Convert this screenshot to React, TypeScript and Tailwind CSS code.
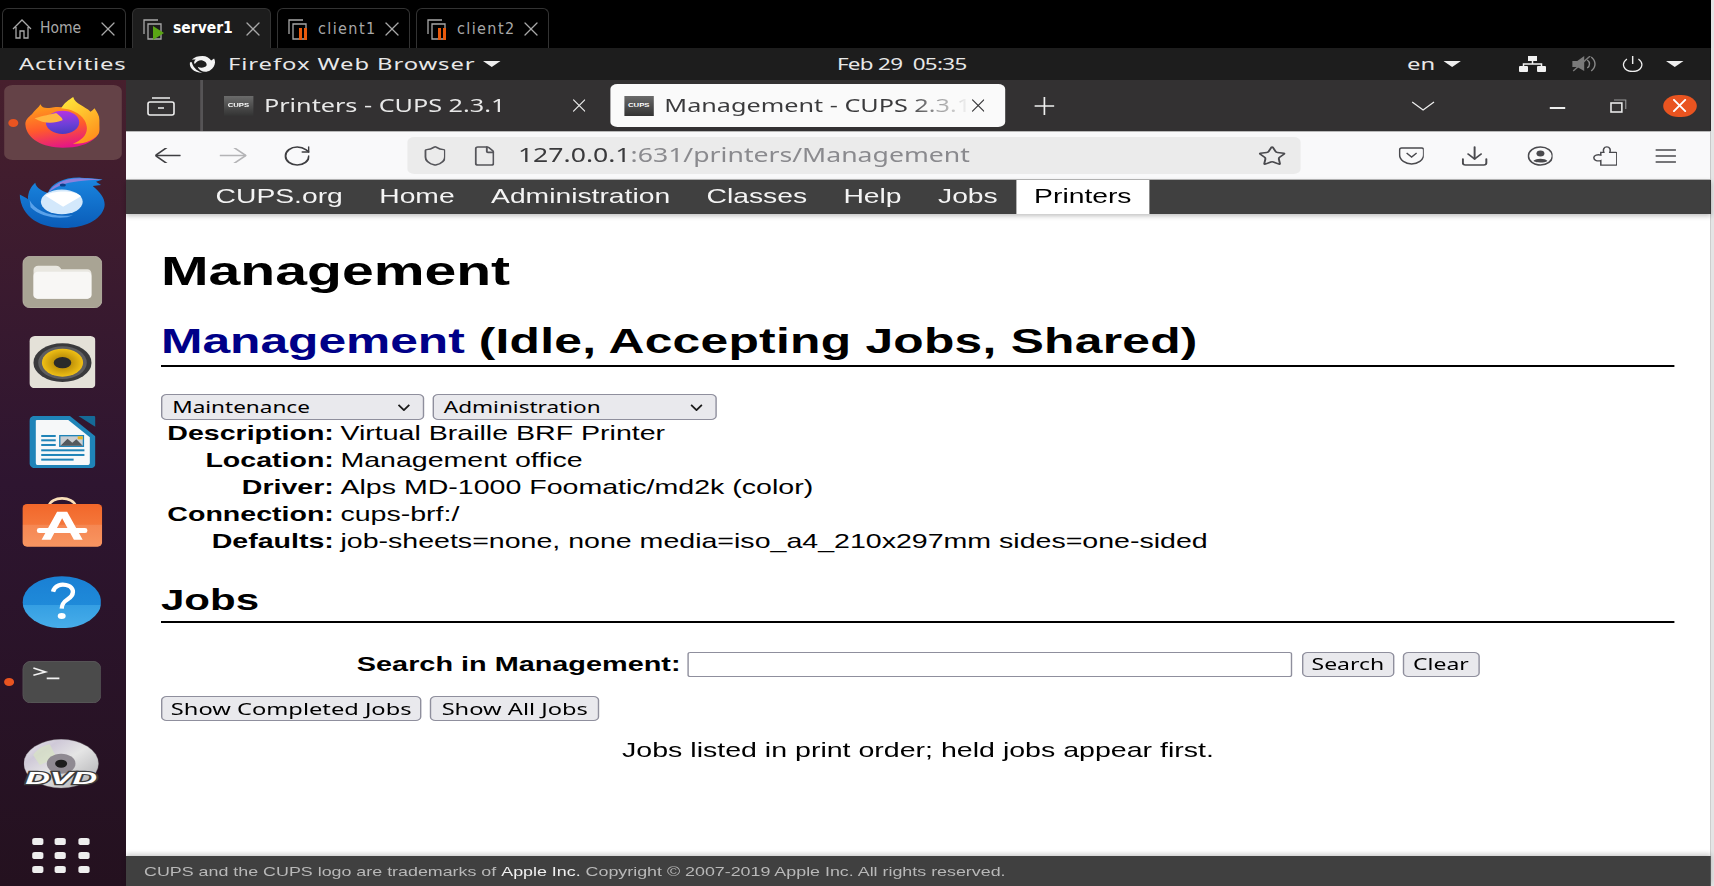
import { ArrowLeft, ArrowRight, Download, File, Plus, RotateCw, Shield, Star, X } from "lucide-react";

const ui = { fontFamily: '"Noto Sans", sans-serif' };
const arial = { fontFamily: '"Liberation Sans", Arial, sans-serif' };

const FirefoxLogo = () => (
  <svg viewBox="72 48 226 152" preserveAspectRatio="none" className="h-[50.7px] w-[53.8px]">
    <defs>
      <linearGradient id="ffBase" x1="0.2" y1="0" x2="0.5" y2="1">
        <stop offset="0" stopColor="#ffa21a" />
        <stop offset="0.55" stopColor="#ff5a2c" />
        <stop offset="1" stopColor="#e31587" />
      </linearGradient>
      <linearGradient id="ffTop" x1="0.2" y1="0" x2="0.8" y2="1">
        <stop offset="0" stopColor="#ffe63a" />
        <stop offset="1" stopColor="#ff8a1a" />
      </linearGradient>
      <linearGradient id="ffMid" x1="0.4" y1="0" x2="0.5" y2="1">
        <stop offset="0" stopColor="#b833e1" />
        <stop offset="0.6" stopColor="#6d3fd8" />
        <stop offset="1" stopColor="#4a3bc0" />
      </linearGradient>
    </defs>
    <path d="M92 100C100 88 112 80 118 70C122 82 135 82 150 80C170 74 240 80 280 110C298 130 300 150 285 168C262 192 225 200 185 200C125 200 76 175 72 130C72 118 82 108 92 100Z" fill="url(#ffBase)" />
    <path d="M180 82C188 66 204 56 216 48C222 70 250 74 268 92C272 90 276 86 280 82C296 104 302 128 295 152C286 176 250 190 215 188C250 175 268 150 250 118C236 95 208 84 180 82Z" fill="url(#ffTop)" />
    <ellipse cx="184" cy="124" rx="50" ry="35" fill="url(#ffMid)" />
    <path d="M100 112C125 104 150 100 165 96C175 104 186 112 184 118C160 128 128 130 100 112Z" fill="#ffb640" />
  </svg>
);

const ThunderbirdLogo = () => (
  <svg viewBox="55 290 257 160" preserveAspectRatio="none" className="h-[51px] w-[61px]">
    <defs>
      <linearGradient id="tbBody" x1="0.5" y1="0" x2="0.5" y2="1">
        <stop offset="0" stopColor="#1a86e0" />
        <stop offset="1" stopColor="#0a5cb8" />
      </linearGradient>
    </defs>
    <path d="M140 340C150 310 190 290 240 292C270 293 290 295 305 298L285 305L300 315L275 318C300 340 315 360 310 385C300 425 250 450 190 450C120 450 60 420 55 345C65 350 75 355 80 360C80 335 90 320 102 308C105 325 125 335 140 340Z" fill="url(#tbBody)" />
    <path d="M142 338C155 312 195 292 240 294C262 295 285 296 303 299C270 300 225 302 190 312C170 318 155 328 142 338Z" fill="#8a80dc" />
    <ellipse cx="182" cy="368" rx="63" ry="39" fill="#d3e8fb" />
    <path d="M132 348C150 334 215 328 240 350L186 383Z" fill="#ffffff" />
    <ellipse cx="185" cy="315" rx="9" ry="5" fill="#0c3f8a" />
    <path d="M85 362C100 395 150 418 215 410C190 425 120 420 88 385Z" fill="#5aa2ea" />
  </svg>
);

const FilesIcon = () => (
  <svg viewBox="65 108 237 157" preserveAspectRatio="none" className="h-[52.3px] w-[57px]">
    <rect x="66" y="109" width="235" height="155" rx="22" fill="#a9a494" stroke="#c4c0b2" strokeWidth="2" />
    <path d="M98 150C98 142 104 137 112 137H165C172 137 176 140 181 148H258C265 148 270 153 270 160V225C270 231 265 236 258 236H110C103 236 98 231 98 225Z" fill="#e9e7e0" />
    <path d="M98 168C98 160 103 155 111 155H258C265 155 270 160 270 167V225C270 231 265 236 258 236H110C103 236 98 231 98 225Z" fill="#f8f7f5" />
  </svg>
);

const RhythmboxIcon = () => (
  <svg viewBox="85 348 197 157" preserveAspectRatio="none" className="h-[52.3px] w-[47.5px]">
    <defs>
      <radialGradient id="rbCone">
        <stop offset="0.3" stopColor="#b78a07" />
        <stop offset="1" stopColor="#f0c015" />
      </radialGradient>
    </defs>
    <rect x="85" y="348" width="197" height="157" rx="16" fill="#e4e1d8" />
    <ellipse cx="183" cy="428" rx="86" ry="58" fill="#3a3a3c" />
    <ellipse cx="183" cy="428" rx="72" ry="49" fill="#5e5e60" />
    <ellipse cx="183" cy="428" rx="61" ry="42" fill="url(#rbCone)" />
    <ellipse cx="183" cy="428" rx="26" ry="17" fill="#2a2a2a" />
  </svg>
);

const WriterIcon = () => (
  <svg viewBox="85 588 197 157" preserveAspectRatio="none" className="h-[52.3px] w-[47.5px]">
    <path d="M100 588H205L282 650V730C282 738 275 745 265 745H102C93 745 85 738 85 730V602C85 594 92 588 100 588Z" fill="#1f84b8" />
    <path d="M230 588H275C280 588 283 592 283 597V622Z" fill="#156a97" />
    <path d="M106 600H200L264 652V728C264 732 261 735 257 735H110C106 735 104 732 104 728V602Z" fill="#f6f8f9" />
    <rect x="120" y="645" width="43" height="6" fill="#1f84b8" />
    <rect x="120" y="658" width="43" height="6" fill="#1f84b8" />
    <rect x="120" y="672" width="43" height="6" fill="#1f84b8" />
    <rect x="173" y="645" width="74" height="36" fill="#1f84b8" />
    <rect x="177" y="649" width="66" height="28" fill="#c9ced2" />
    <path d="M177 677L198 656L212 668L224 658L243 677Z" fill="#55595d" />
    <rect x="228" y="649" width="15" height="9" fill="#e6b422" />
    <rect x="120" y="688" width="128" height="6" fill="#1f84b8" />
    <rect x="120" y="702" width="128" height="6" fill="#1f84b8" />
    <rect x="120" y="716" width="96" height="6" fill="#1f84b8" />
  </svg>
);

const SoftwareIcon = () => (
  <svg viewBox="65 822 237 150" preserveAspectRatio="none" className="h-[50px] w-[57px]">
    <defs>
      <linearGradient id="swBag" x1="0" y1="0" x2="0" y2="1">
        <stop offset="0" stopColor="#f2672a" />
        <stop offset="1" stopColor="#f7874c" />
      </linearGradient>
    </defs>
    <path d="M143 850C150 818 215 818 224 850" fill="none" stroke="#f9dfb8" strokeWidth="8" />
    <rect x="65" y="843" width="237" height="128" rx="14" fill="url(#swBag)" />
    <path d="M65 905H302V957C302 965 295 971 288 971H79C72 971 65 965 65 957Z" fill="#ffffff" opacity="0.12" />
    <path d="M168 866H198L244 950H218L183 886L149 950H122Z" fill="#ffffff" />
    <rect x="108" y="915" width="150" height="15" rx="7" fill="#ffffff" />
  </svg>
);

const HelpIcon = () => (
  <svg viewBox="65 78 237 157" preserveAspectRatio="none" className="h-[52.3px] w-[56.4px]">
    <defs>
      <linearGradient id="hpBody" x1="0" y1="0" x2="0" y2="1">
        <stop offset="0" stopColor="#1a80d4" />
        <stop offset="0.55" stopColor="#1f8ad9" />
        <stop offset="0.56" stopColor="#359fe3" />
        <stop offset="1" stopColor="#47ade9" />
      </linearGradient>
    </defs>
    <ellipse cx="183.5" cy="156.5" rx="118" ry="78" fill="url(#hpBody)" />
    <path d="M157 125C162 105 182 102 196 105C214 109 222 122 213 137C205 150 184 150 183 176" fill="none" stroke="#ffffff" strokeWidth="13" />
    <ellipse cx="183" cy="198" rx="12" ry="9" fill="#ffffff" />
  </svg>
);

const TerminalIcon = () => (
  <svg viewBox="65 333 237 127" preserveAspectRatio="none" className="h-[42.3px] w-[56.4px]">
    <rect x="66" y="334" width="235" height="125" rx="24" fill="#4b4b4b" stroke="#666666" strokeWidth="2" />
    <path d="M98 354L134 366L98 376" fill="none" stroke="#f2f2f2" strokeWidth="5" />
    <path d="M138 385H176" stroke="#f2f2f2" strokeWidth="5" />
  </svg>
);

const DvdIcon = () => (
  <svg viewBox="72 562 225 148" preserveAspectRatio="none" className="h-[49.3px] w-[53.6px]">
    <defs>
      <linearGradient id="dvdDisc" x1="0" y1="0" x2="1" y2="1">
        <stop offset="0" stopColor="#efeff0" />
        <stop offset="0.25" stopColor="#cfc9d8" />
        <stop offset="0.5" stopColor="#e5e5e5" />
        <stop offset="1" stopColor="#a9a9ad" />
      </linearGradient>
    </defs>
    <ellipse cx="184" cy="636" rx="112" ry="73" fill="url(#dvdDisc)" stroke="#8f8f8f" strokeWidth="1" />
    <path d="M100 610C115 590 135 580 150 578L170 618L120 640Z" fill="#d8e8c0" opacity="0.6" />
    <ellipse cx="184" cy="636" rx="43" ry="30" fill="#8f8a92" />
    <ellipse cx="184" cy="636" rx="18" ry="12" fill="#1c1c1c" />
    <text x="76" y="697" textLength="216" lengthAdjust="spacingAndGlyphs" fontFamily="Liberation Sans" fontStyle="italic" fontWeight="700" fontSize="52" fill="#ffffff" stroke="#3c3c3c" strokeWidth="7" paintOrder="stroke">
      DVD
    </text>
  </svg>
);

const AppGrid = () => (
  <div className="grid w-[45px] grid-cols-3 gap-x-[4.5px] gap-y-[7px]">
    {Array.from({ length: 9 }).map((_, i) => (
      <span key={i} className="h-[7px] w-[8.2px] rounded-[2px] bg-[#eeeeee]" />
    ))}
  </div>
);

const RunningDot = () => (
  <span className="absolute left-[3px] top-1/2 h-[8px] w-[7px] -translate-y-1/2 rounded-full bg-[#e95420]" />
);

const Dock = () => (
  <div className="flex h-[806px] w-[90px] shrink-0 flex-col bg-gradient-to-b from-[#471f2d] via-[#2e1530] to-[#24111f] pt-[5px]">
    <div className="relative mx-[3px] flex h-[75px] shrink-0 items-center justify-center rounded-[6px] bg-[#644247] pr-[1px]">
      <FirefoxLogo />
      <RunningDot />
    </div>
    <div className="flex h-[82px] shrink-0 items-center justify-center pr-[2px] pt-[3px]"><ThunderbirdLogo /></div>
    <div className="flex h-[80px] shrink-0 items-center justify-center pr-[1.5px]"><FilesIcon /></div>
    <div className="flex h-[80px] shrink-0 items-center justify-center pr-[1.5px]"><RhythmboxIcon /></div>
    <div className="flex h-[80px] shrink-0 items-center justify-center pr-[1.5px]"><WriterIcon /></div>
    <div className="flex h-[80px] shrink-0 items-center justify-center pr-[1.5px]"><SoftwareIcon /></div>
    <div className="flex h-[80px] shrink-0 items-center justify-center pr-[1.5px]"><HelpIcon /></div>
    <div className="relative flex h-[80px] shrink-0 items-center justify-center pr-[1.5px]"><TerminalIcon /><RunningDot /></div>
    <div className="mt-[2px] flex h-[80px] shrink-0 items-center justify-center pr-[1.5px]"><DvdIcon /></div>
    <div className="mt-[34px] flex justify-center"><AppGrid /></div>
  </div>
);

const Caret = () => (
  <svg viewBox="0 0 18 6" preserveAspectRatio="none" className="h-[6px] w-[12.5px] shrink-0">
    <path d="M0 0H18L9 6Z" fill="#eeeeee" />
  </svg>
);

const TopPanel = () => (
  <div className="flex h-[32px] items-center bg-[#1d1d1d] pl-[13.6px] text-[17px] text-[#e8e8e8]" style={ui}>
    <span className="w-[77px] whitespace-nowrap tracking-[0.6px]">Activities</span>
    <svg viewBox="0 0 28 20" preserveAspectRatio="none" className="ml-[44px] h-[18px] w-[19.3px]">
      <path d="M14 1C9 1 6 2 3 5L7 5C5 7 5 9 6 10C8 7 11 5 14 6C17 7 19 9 18 12C17 14 12 15 9 13C11 19 18 20 22 17C27 13 28 8 26 4L23 6C21 3 18 1 14 1Z" fill="#f2f2f2" />
      <path d="M1 8C0 14 4 19 14 20C7 17 4 13 3 8Z" fill="#f2f2f2" />
    </svg>
    <span className="ml-[9px] w-[176px] whitespace-nowrap tracking-[0.65px]">Firefox Web Browser</span>
    <span className="ml-[6.4px]"><Caret /></span>
    <span className="ml-[240px] w-[112px] whitespace-nowrap text-[16px] tracking-[-0.48px]">Feb 29&nbsp; 05:35</span>
    <span className="ml-[295.2px] w-[20px] whitespace-nowrap">en</span>
    <span className="ml-[6.5px]"><Caret /></span>
    <svg viewBox="0 0 27 16" preserveAspectRatio="none" className="ml-[41.5px] h-[16px] w-[19.3px]">
      <rect x="9" y="0" width="9" height="5" fill="#f2f2f2" />
      <rect x="0" y="10" width="9" height="6" rx="1" fill="#f2f2f2" />
      <rect x="18" y="10" width="9" height="6" rx="1" fill="#f2f2f2" />
      <path d="M13.5 5V8M4.5 10V8H22.5V10" fill="none" stroke="#f2f2f2" strokeWidth="1.5" />
    </svg>
    <svg viewBox="0 0 25 16" preserveAspectRatio="none" className="ml-[17.8px] h-[16px] w-[17.9px]">
      <path d="M0 5H5L12 0V15L5 11H0Z" fill="#7a7a7a" />
      <path d="M15 4C18 6 18 10 15 12M19 1C24 5 24 11 19 15" fill="none" stroke="#8a8a8a" strokeWidth="1.4" />
      <path d="M1 15L18 0" stroke="#7a7a7a" strokeWidth="1.5" />
    </svg>
    <svg viewBox="0 0 24 16" preserveAspectRatio="none" className="ml-[17.8px] h-[16px] w-[16.4px]">
      <path d="M6 3C-1 8 3 15.5 12 15.5C21 15.5 25 8 18 3" fill="none" stroke="#eeeeee" strokeWidth="1.3" />
      <path d="M12 0V8" stroke="#eeeeee" strokeWidth="1.5" />
    </svg>
    <span className="ml-[15.7px]"><Caret /></span>
  </div>
);

const Favicon = () => (
  <span className="flex h-[20px] w-[20.5px] shrink-0 items-center justify-center bg-gradient-to-b from-[#6b6b6b] to-[#333333] text-[5.5px] font-bold text-white" style={arial}>
    CUPS
  </span>
);

const TitleBar = () => (
  <div className="flex h-[51px] shrink-0 items-center bg-[#333132] text-[18px]" style={ui}>
    <div className="flex h-full w-[54.5px] shrink-0 items-center border-r-2 border-[#565456] pl-[15px]">
      <svg viewBox="0 0 28 20" preserveAspectRatio="none" className="h-[20px] w-[20px]">
        <rect x="1" y="6" width="26" height="13" rx="2" fill="none" stroke="#eeeeee" strokeWidth="1.6" />
        <path d="M5 2H23M11 12H17" stroke="#eeeeee" strokeWidth="1.6" />
      </svg>
    </div>
    <div className="flex w-[288.5px] items-center pl-[15.5px] text-[#e8e8e8]">
      <Favicon />
      <span className="ml-[8px] w-[175px] whitespace-nowrap">Printers - CUPS 2.3.1</span>
      <X viewBox="5 5 14 14" className="ml-[45px] h-[13px] w-[9.4px] text-[#e8e8e8]" strokeWidth={1.3} preserveAspectRatio="none" />
    </div>
    <div className="ml-[3px] flex h-[43px] w-[282px] items-center rounded-[5px] bg-[#fafafa] pl-[10px] text-[#3a3a3c]">
      <Favicon />
      <span className="ml-[8px] w-[222px] whitespace-nowrap bg-gradient-to-r from-[#3a3a3c] from-78% to-transparent to-98% bg-clip-text text-transparent">
        Management - CUPS 2.3.1
      </span>
      <X viewBox="5 5 14 14" className="ml-[-3px] h-[13px] w-[9.4px] shrink-0 text-[#3a3a3c]" strokeWidth={1.3} preserveAspectRatio="none" />
    </div>
    <Plus viewBox="5 5 14 14" className="ml-[20.7px] h-[18px] w-[14px] text-[#f0f0f0]" strokeWidth={1.2} preserveAspectRatio="none" />
    <svg viewBox="0 0 24 10" preserveAspectRatio="none" className="ml-[255.7px] h-[10px] w-[17px]">
      <path d="M1 1L12 9L23 1" fill="none" stroke="#eeeeee" strokeWidth="1.3" />
    </svg>
    <span className="ml-[81.5px] mt-[5px] h-[1.5px] w-[11.4px] bg-[#eeeeee]" />
    <svg viewBox="0 0 17 16" preserveAspectRatio="none" className="ml-[32px] h-[16px] w-[12px]">
      <rect x="1" y="5" width="11" height="9" fill="none" stroke="#e8e8e8" strokeWidth="1.6" />
      <path d="M4 2H16V11" fill="none" stroke="#9a9a9a" strokeWidth="1.2" />
    </svg>
    <span className="ml-[26px] flex h-[22px] w-[23.6px] items-center justify-center rounded-full bg-[#e95420]">
      <X viewBox="5 5 14 14" className="h-[13px] w-[9.4px] text-white" strokeWidth={2} preserveAspectRatio="none" />
    </span>
  </div>
);

const NavBar = () => (
  <div className="flex h-[49px] shrink-0 items-center border-y border-[#b9b9b9] bg-[#f9f9fa] pl-[21.4px] text-[#3f3f42]">
    <ArrowLeft viewBox="5 6 14 12" className="h-[15px] w-[17.9px]" strokeWidth={1.1} preserveAspectRatio="none" />
    <ArrowRight viewBox="5 6 14 12" className="ml-[27.9px] h-[15px] w-[18.6px] text-[#b4b4b6]" strokeWidth={1.1} preserveAspectRatio="none" />
    <RotateCw viewBox="2 2 20 20" className="ml-[27.1px] h-[20px] w-[18.6px]" strokeWidth={1.5} preserveAspectRatio="none" />
    <div className="ml-[69.3px] flex h-[37px] w-[638.6px] items-center rounded-[5px] bg-[#ebebeb] pl-[12px] pr-[10.7px]">
      <Shield viewBox="3 1 18 22" className="h-[20px] w-[15.7px] text-[#55555a]" strokeWidth={1.6} preserveAspectRatio="none" />
      <File viewBox="3 1 18 22" className="ml-[20.7px] h-[20px] w-[14.3px] text-[#55555a]" strokeWidth={1.7} preserveAspectRatio="none" />
      <span className="ml-[16.5px] whitespace-nowrap text-[19px] text-[#3a3a3c]" style={ui}>
        127.0.0.1<span className="text-[#8a8a8e]">:631/printers/Management</span>
      </span>
      <Star viewBox="1 1 22 22" className="ml-auto h-[20px] w-[19.3px] text-[#4a4a4e]" strokeWidth={1.6} preserveAspectRatio="none" />
    </div>
    <svg viewBox="0 0 26 18" preserveAspectRatio="none" className="ml-[69.3px] h-[18px] w-[18.6px]">
      <path d="M3 1H23C24 1 25 2 25 3V8C25 13 19 17 13 17C7 17 1 13 1 8V3C1 2 2 1 3 1Z" fill="none" stroke="#4a4a4e" strokeWidth="1.5" />
      <path d="M8 6L13 10L18 6" fill="none" stroke="#4a4a4e" strokeWidth="1.5" />
    </svg>
    <Download viewBox="2 2 20 20" className="ml-[27.1px] h-[20px] w-[18.6px] text-[#4a4a4e]" strokeWidth={1.5} preserveAspectRatio="none" />
    <svg viewBox="0 0 26 20" preserveAspectRatio="none" className="ml-[27.9px] h-[20px] w-[18.6px]">
      <ellipse cx="13" cy="10" rx="12" ry="9" fill="none" stroke="#4a4a4e" strokeWidth="1.6" />
      <ellipse cx="13" cy="7.5" rx="4" ry="3" fill="#4a4a4e" />
      <path d="M6 15C8 12 18 12 20 15C17 17 9 17 6 15Z" fill="#4a4a4e" />
    </svg>
    <svg viewBox="0 0 26 22" preserveAspectRatio="none" className="ml-[27.1px] h-[20px] w-[18.6px]">
      <path d="M9 7H12C11 4 12 1 15 1C18 1 19 4 18 7H24C24.6 7 25 7.4 25 8V20C25 20.6 24.6 21 24 21H9V16C6 17 2 16 2 13C2 10 6 9 9 10Z" fill="none" stroke="#4a4a4e" strokeWidth="1.5" />
    </svg>
    <svg viewBox="0 0 26 14" preserveAspectRatio="none" className="ml-[27.1px] h-[14px] w-[15.7px]">
      <path d="M1 1H25M1 7H25M1 13H25" stroke="#4a4a4e" strokeWidth="1.4" />
    </svg>
  </div>
);

const CupsNav = () => (
  <div className="relative flex h-[34px] shrink-0 items-stretch bg-[#404040] pl-[51px] text-[20.2px] text-white shadow-[0_2px_4px_rgba(0,0,0,0.25)]" style={arial}>
    {["CUPS.org", "Home", "Administration", "Classes", "Help", "Jobs"].map((item) => (
      <a key={item} className="flex items-center px-[13px] pb-[1px] text-[#f4f4f4]">{item}</a>
    ))}
    <a className="flex items-center bg-white px-[13px] pb-[1px] text-black">Printers</a>
  </div>
);

const ChromeButton = ({ label, w }: { label: string; w: string }) => (
  <button className={`flex h-[25px] items-center justify-center rounded-[4px] border border-[#8f8f9d] bg-[#e9e9ed] text-black ${w}`} style={ui}>
    {label}
  </button>
);

const SelectBox = ({ label, w }: { label: string; w: string }) => (
  <div className={`flex h-[26px] items-center justify-between rounded-[4px] border border-[#8f8f9d] bg-[#e9e9ed] pl-[7px] pr-[9px] text-[16.1px] text-black ${w}`} style={ui}>
    <span>{label}</span>
    <svg viewBox="0 0 14 8" preserveAspectRatio="none" className="h-[7px] w-[9px]">
      <path d="M1 1L7 7L13 1" fill="none" stroke="#1a1a1a" strokeWidth="2" />
    </svg>
  </div>
);

const details = [
  ["Description:", "Virtual Braille BRF Printer"],
  ["Location:", "Management office"],
  ["Driver:", "Alps MD-1000 Foomatic/md2k (color)"],
  ["Connection:", "cups-brf:/"],
  ["Defaults:", "job-sheets=none, none media=iso_a4_210x297mm sides=one-sided"],
];

const Page = () => (
  <div className="flex min-h-0 flex-1 flex-col bg-white text-black" style={arial}>
    <main className="flex-1 pl-[25px] pr-[25.7px] pt-[33px]">
      <h1 className="h-[48px] text-[40.8px] font-bold leading-[48px]">Management</h1>
      <h2 className="mt-[23px] h-[49px] border-b-2 border-black text-[35.5px] font-bold leading-[46px]">
        <span className="text-[#000088]">Management</span>{" "}
        <span className="tracking-[0.2px]">(Idle, Accepting Jobs, Shared)</span>
      </h2>
      <div className="mt-[27px] flex gap-[6px]">
        <SelectBox label="Maintenance" w="w-[188px]" />
        <SelectBox label="Administration" w="w-[202.5px]" />
      </div>
      <table className="border-collapse text-[20.4px]">
        <tbody>
          {details.map(([label, value]) => (
            <tr key={label} className="h-[27px]">
              <th className="w-[120px] whitespace-nowrap pl-[4.5px] pr-0 text-right font-bold leading-[27px]">{label}</th>
              <td className="whitespace-nowrap pl-[4.7px] leading-[27px]">{value}</td>
            </tr>
          ))}
        </tbody>
      </table>
      <h3 className="mt-[27px] h-[41px] border-b-2 border-black text-[30px] font-bold leading-[36px]">Jobs</h3>
      <form className="mt-[26px] flex items-center justify-center gap-[6px]">
        <b className="mr-[-1.5px] text-[20.6px]">Search in Management:</b>
        <input className="h-[25px] w-[432.5px] rounded-[2px] border border-[#8f8f9d] bg-white" />
        <ChromeButton label="Search" w="ml-[0.5px] w-[66.4px] text-[16.4px]" />
        <ChromeButton label="Clear" w="w-[54.6px] text-[16.4px]" />
      </form>
      <div className="mt-[16px] flex gap-[6px]">
        <ChromeButton label="Show Completed Jobs" w="w-[186px] text-[16.9px]" />
        <ChromeButton label="Show All Jobs" w="w-[121.4px] text-[16.9px]" />
      </div>
      <p className="mt-[16px] text-center text-[20.4px] leading-[27px]">Jobs listed in print order; held jobs appear first.</p>
    </main>
    <footer className="flex h-[30px] shrink-0 items-center bg-[#404040] pl-[12.9px] pt-[2px] text-[12.75px] text-[#b8b8b8] shadow-[0_-2px_4px_rgba(0,0,0,0.2)]">
      CUPS and the CUPS logo are trademarks of&nbsp;<span className="text-[#f0f0f0]">Apple Inc.</span>&nbsp;Copyright © 2007-2019 Apple Inc. All rights reserved.
    </footer>
  </div>
);

const HostTab = ({ label, active, w, textClass, icon }: { label: string; active?: boolean; w: string; textClass: string; icon: React.ReactNode }) => (
  <div className={`flex h-[40px] items-center rounded-t-[6px] border border-b-0 border-[#333333] pl-[9px] pr-[10px] ${w} ${active ? "bg-[#1d1d1d] font-bold text-white" : "bg-black text-[#a8a8a8]"}`}>
    {icon}
    <span className={`ml-[8px] whitespace-nowrap ${textClass}`} style={{ fontFamily: '"DejaVu Sans Condensed", "Liberation Sans Narrow", sans-serif' }}>{label}</span>
    <X viewBox="5 5 14 14" className="ml-auto h-[14px] w-[14px] text-[#a8a8a8]" strokeWidth={1.3} />
  </div>
);

const VmIcon = ({ state }: { state: "run" | "pause" }) => (
  <svg viewBox="0 0 23 24" className="h-[24px] w-[23px] shrink-0">
    <path d="M16 3H2V17" fill="none" stroke="#a8a8a8" strokeWidth="1.3" />
    <path d="M19 7H6V22H19Z" fill="none" stroke="#a8a8a8" strokeWidth="1.3" />
    {state === "run" ? (
      <path d="M11 9L22 16L11 23Z" fill="#5aa515" />
    ) : (
      <g fill="#e8590c">
        <rect x="12" y="11" width="3" height="12" />
        <rect x="17" y="11" width="3" height="12" />
      </g>
    )}
  </svg>
);

const HostTabs = () => (
  <div className="flex h-[48px] shrink-0 items-end gap-[6px] bg-black pl-[2px]">
    <HostTab
      label="Home"
      w="w-[124px]"
      textClass="text-[15.5px]"
      icon={
        <svg viewBox="0 0 20 22" className="h-[22px] w-[20px] shrink-0">
          <path d="M1 11L10 2L19 11M4 9V20H8V13H12V20H16V9" fill="none" stroke="#a8a8a8" strokeWidth="1.3" />
        </svg>
      }
    />
    <HostTab label="server1" active w="w-[139px]" textClass="text-[15.5px] -ml-[1px]" icon={<VmIcon state="run" />} />
    <HostTab label="client1" w="w-[133px]" textClass="text-[16px] tracking-[1.4px]" icon={<VmIcon state="pause" />} />
    <HostTab label="client2" w="w-[133px]" textClass="text-[16px] tracking-[1.4px]" icon={<VmIcon state="pause" />} />
  </div>
);

export default function App() {
  return (
    <div className="flex h-[886px] w-[1714px] overflow-hidden bg-black">
      <div className="flex w-[1711px] shrink-0 flex-col">
        <HostTabs />
        <div className="h-[838px] w-[1222.14px] origin-top-left scale-x-[1.4]">
          <TopPanel />
          <div className="flex h-[806px]">
            <Dock />
            <div className="flex min-w-0 flex-1 flex-col">
              <TitleBar />
              <NavBar />
              <CupsNav />
              <Page />
            </div>
          </div>
        </div>
      </div>
      <div className="w-[3px] bg-[#e4e4e4]" />
    </div>
  );
}
